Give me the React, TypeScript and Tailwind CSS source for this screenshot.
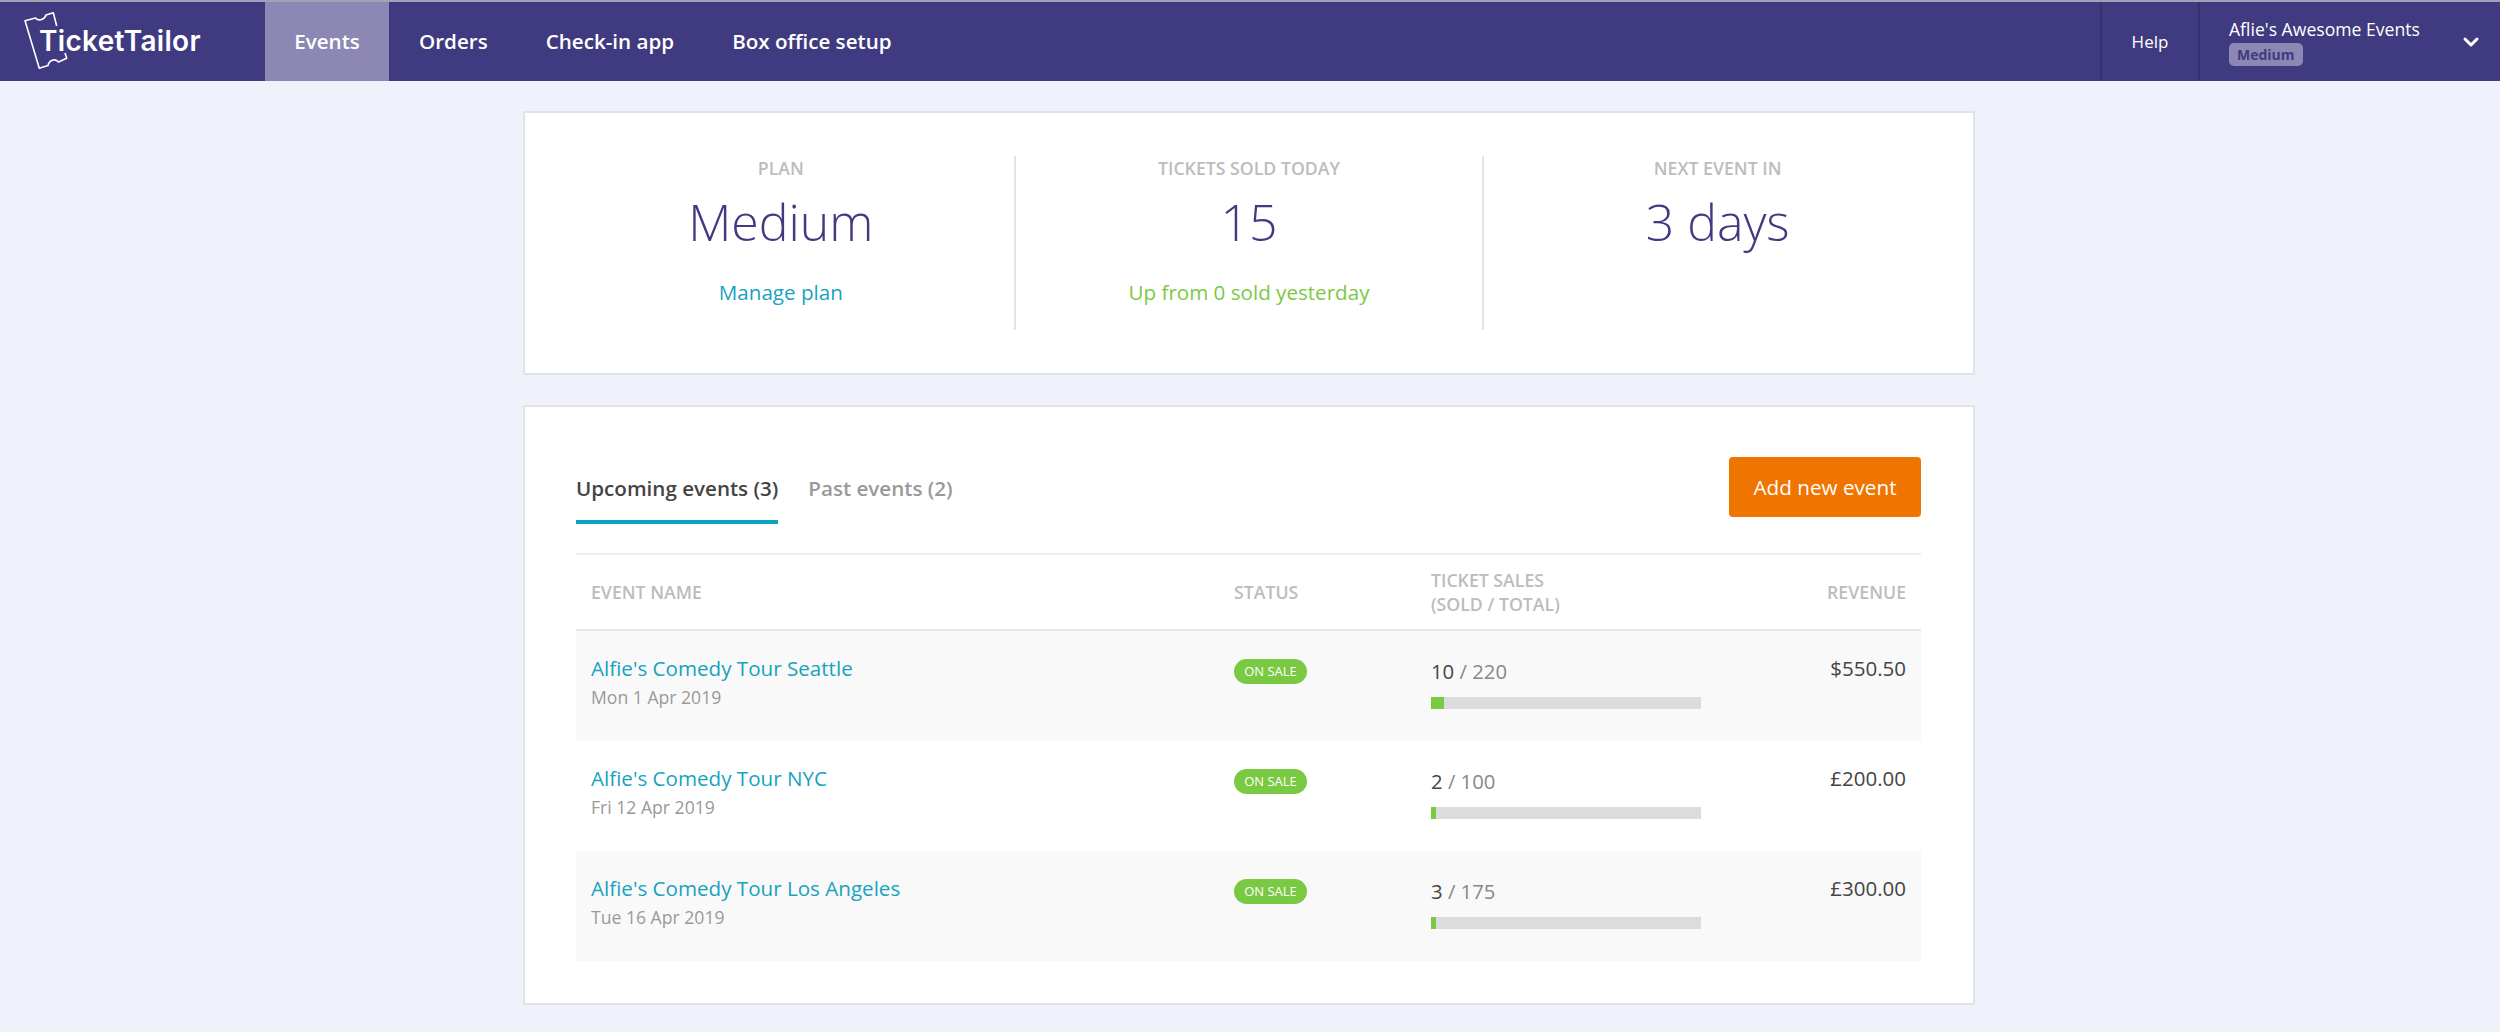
import { ChevronDown } from "lucide-react";

const rows = [
  { name: "Alfie's Comedy Tour Seattle", date: "Mon 1 Apr 2019", sold: 10, total: 220, revenue: "$550.50", pct: "w-[13px]", shaded: true },
  { name: "Alfie's Comedy Tour NYC", date: "Fri 12 Apr 2019", sold: 2, total: 100, revenue: "£200.00", pct: "w-[5px]", shaded: false },
  { name: "Alfie's Comedy Tour Los Angeles", date: "Tue 16 Apr 2019", sold: 3, total: 175, revenue: "£300.00", pct: "w-[5px]", shaded: true },
];

function Logo() {
  return (
    <div className="relative flex h-full w-[265px] items-center pb-[1px] pl-[39px]">
      {/* Ticket outline */}
      <svg viewBox="0 0 70 72" fill="none" stroke="white" strokeWidth="1.6" strokeLinejoin="round" className="absolute left-[20px] top-[3px] h-[72px] w-[70px]">
        <path d="M36.7 21 L33.3 7.7 L26 10 C25 14 19 17 15.5 13 L5 15.7 L19.3 63.3 L28 60.5 C29 55 35 53 38.5 57 L46.7 53.3 L45 48" />
      </svg>
      <span className="relative font-['Inter',sans-serif] text-[28px] font-semibold tracking-[0.3px] text-white">TicketTailor</span>
    </div>
  );
}

function Stat({ label, value, note, noteClass, divider }: { label: string; value: string; note?: string; noteClass?: string; divider?: boolean }) {
  return (
    <div className={`flex h-[174px] flex-col items-center ${divider ? "border-l-2 border-[#e3e3e3]" : "pl-[3px]"}`}>
      <div className="text-[17.7px] leading-[24px] font-semibold text-[#bcbcbc]">{label}</div>
      <div className="mt-[7px] text-[50px] leading-[70px] font-light text-[#413a80]">{value}</div>
      {note && <div className={`mt-[21px] text-[20.6px] leading-[28px] ${noteClass}`}>{note}</div>}
    </div>
  );
}

export default function App() {
  return (
    <div className="min-h-screen bg-[#eff2fb] font-['Open_Sans',sans-serif]">
      {/* Top nav */}
      <nav className="flex h-[81px] border-t-2 border-[#a3a1b8] bg-[#403a80] text-white">
        <Logo />
        <a className="flex w-[124px] items-center justify-center bg-[#8c88b3] text-[20.6px] font-semibold">Events</a>
        <a className="ml-[30px] flex items-center text-[20.6px] font-semibold">Orders</a>
        <a className="ml-[58px] flex items-center text-[20.6px] font-semibold">Check-in app</a>
        <a className="ml-[58px] flex items-center text-[20.6px] font-semibold">Box office setup</a>
        <div className="ml-auto flex">
          <div className="flex w-[98px] items-center justify-center border-l-2 border-[#37316f] text-[17px]">Help</div>
          <div className="flex w-[302px] items-center justify-between border-l-2 border-[#37316f] pr-[17px] pl-[29px]">
            <div className="flex flex-col items-start">
              <span className="text-[17.6px] leading-[23px]">Aflie's Awesome Events</span>
              <span className="mt-[2px] rounded-[5px] bg-[#8c88b3] px-[8px] text-[14px] leading-[23px] font-bold text-[#403a80]">Medium</span>
            </div>
            <ChevronDown className="h-[24px] w-[24px]" strokeWidth={3} />
          </div>
        </div>
      </nav>

      <main className="ml-[523px] flex w-[1452px] flex-col gap-[30px] pt-[30px]">
        {/* Stats card */}
        <section className="grid h-[264px] grid-cols-3 border-2 border-[#e3e3e6] bg-white pt-[43px] pr-[22px] pl-[20px]">
          <Stat label="PLAN" value="Medium" note="Manage plan" noteClass="text-[#17a2bf]" />
          <Stat label="TICKETS SOLD TODAY" value="15" note="Up from 0 sold yesterday" noteClass="text-[#7ac943]" divider />
          <Stat label="NEXT EVENT IN" value="3 days" divider />
        </section>

        {/* Events card */}
        <section className="h-[600px] border-2 border-[#e3e3e6] bg-white pt-[50px] pr-[52px] pl-[51px]">
          <div className="flex h-[98px] items-start justify-between border-b-2 border-[#efefef]">
            <div className="flex gap-[30px]">
              <div className="h-[67px] border-b-4 border-[#0aa3c2] pt-[17px] text-[20.6px] leading-[28px] font-semibold text-[#444444]">Upcoming events (3)</div>
              <div className="pt-[17px] text-[20.6px] leading-[28px] font-semibold text-[#999999]">Past events (2)</div>
            </div>
            <button className="h-[60px] w-[192px] rounded-[4px] bg-[#f07400] pt-[2px] text-[20.7px] text-white">Add new event</button>
          </div>

          {/* Table header */}
          <div className="grid h-[76px] grid-cols-[643px_197px_1fr_auto] items-center border-b-2 border-[#e8e8e8] px-[15px] text-[17.7px] leading-[24px] font-semibold text-[#bcbcbc]">
            <div>EVENT NAME</div>
            <div>STATUS</div>
            <div>
              TICKET SALES
              <br />
              (SOLD / TOTAL)
            </div>
            <div>REVENUE</div>
          </div>

          {rows.map((row) => (
            <div key={row.name} className={`grid h-[110px] grid-cols-[643px_197px_1fr_auto] px-[15px] pt-[23px] ${row.shaded ? "bg-[#f9f9f9]" : ""}`}>
              <div>
                <div className="text-[20.6px] leading-[28px] text-[#17a2bf]">{row.name}</div>
                <div className="mt-[4px] text-[17.6px] leading-[22px] text-[#999999]">{row.date}</div>
              </div>
              <div className="pt-[5px]">
                <span className="flex h-[25px] w-[73px] items-center justify-center rounded-full bg-[#7ac943] text-[13px] text-white">ON SALE</span>
              </div>
              <div>
                <div className="pt-[3px] text-[20.3px] leading-[28px] text-[#888888]">
                  <span className="text-[#444444]">{row.sold}</span> / {row.total}
                </div>
                <div className="mt-[12px] h-[12px] w-[270px] bg-[#dcdcdc]">
                  <div className={`h-full bg-[#7ac943] ${row.pct}`} />
                </div>
              </div>
              <div className="text-[20.5px] leading-[28px] text-[#444444]">{row.revenue}</div>
            </div>
          ))}
        </section>
      </main>
    </div>
  );
}
